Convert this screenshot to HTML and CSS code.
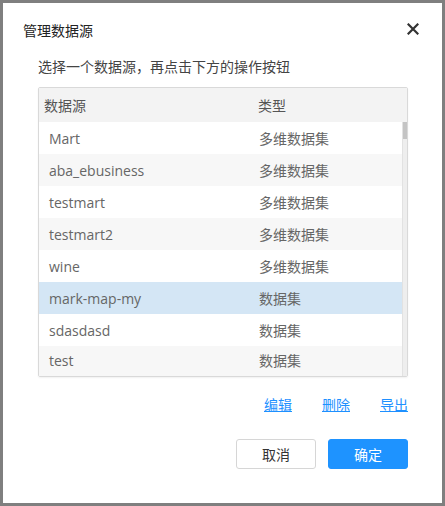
FILE: index.html
```html
<!DOCTYPE html>
<html lang="zh">
<head>
<meta charset="utf-8">
<title>管理数据源</title>
<link rel="stylesheet" href="styles.css">
</head>
<body>
<div class="dialog">
  <div class="dlg-head">
    <span class="dlg-title">管理数据源</span>
    <svg class="close" width="12" height="12" viewBox="0 0 12 12"><path d="M1.5 1.5 L10.5 10.5 M10.5 1.5 L1.5 10.5" stroke="#333" stroke-width="2.2" stroke-linecap="square" fill="none"/></svg>
  </div>
  <div class="dlg-body">
    <p class="hint">选择一个数据源，再点击下方的操作按钮</p>
    <div class="grid">
      <div class="grid-head">
        <span class="c1">数据源</span>
        <span class="c2">类型</span>
      </div>
      <div class="grid-body">
        <div class="rows">
          <div class="row"><span class="c1">Mart</span><span class="c2">多维数据集</span></div>
          <div class="row alt"><span class="c1">aba_ebusiness</span><span class="c2">多维数据集</span></div>
          <div class="row"><span class="c1">testmart</span><span class="c2">多维数据集</span></div>
          <div class="row alt"><span class="c1">testmart2</span><span class="c2">多维数据集</span></div>
          <div class="row"><span class="c1">wine</span><span class="c2">多维数据集</span></div>
          <div class="row sel"><span class="c1">mark-map-my</span><span class="c2">数据集</span></div>
          <div class="row"><span class="c1">sdasdasd</span><span class="c2">数据集</span></div>
          <div class="row alt last"><span class="c1">test</span><span class="c2">数据集</span></div>
        </div>
        <div class="scrollbar"><div class="thumb"></div></div>
      </div>
    </div>
    <div class="links">
      <a href="#">编辑</a>
      <a href="#">删除</a>
      <a href="#">导出</a>
    </div>
    <div class="buttons">
      <button class="btn">取消</button>
      <button class="btn primary">确定</button>
    </div>
  </div>
</div>
</body>
</html>
```
FILE: styles.css
```css
html, body {
  margin: 0;
  padding: 0;
}
body {
  background: #7f7f7f;
  width: 445px;
  height: 506px;
  padding: 3px;
  box-sizing: border-box;
  font-family: "Open Sans", "Noto Sans CJK SC", sans-serif;
  font-size: 14px;
  overflow: hidden;
}
.dialog {
  width: 439px;
  height: 500px;
  background: #fff;
  box-sizing: border-box;
}
.dlg-head {
  display: flex;
  align-items: center;
  justify-content: space-between;
  padding: 17px 23px 0 20px;
  height: 20px;
}
.dlg-title {
  font-family: "Noto Sans CJK SC", sans-serif;
  font-size: 14px;
  line-height: 20px;
  color: #222;
}
.close {
  display: block;
  margin-top: -2px;
}
.dlg-body {
  padding: 16px 34px 0 35px;
}
.hint {
  margin: 0;
  font-family: "Noto Sans CJK SC", sans-serif;
  font-size: 14px;
  line-height: 20px;
  color: #444;
}
.grid {
  margin-top: 11px;
  border: 1px solid #d9d9d9;
  border-radius: 2px;
  box-shadow: 0 1px 2px rgba(0,0,0,0.06);
  overflow: hidden;
}
.grid-head {
  display: flex;
  height: 34px;
  align-items: center;
  background: #f3f3f3;
  color: #555;
  font-family: "Noto Sans CJK SC", sans-serif;
}
.grid-head .c1 {
  width: 214px;
  padding-left: 5px;
}
.grid-body {
  display: flex;
  height: 254px;
  overflow: hidden;
}
.rows {
  flex: 1;
}
.row {
  display: flex;
  align-items: center;
  height: 32px;
  color: #666;
  background: #fff;
}
.row.last {
  height: 30px;
  padding-bottom: 2px;
  box-sizing: border-box;
}
.row.alt {
  background: #f7f7f7;
}
.row.sel {
  background: #d4e6f5;
}
.row .c1 {
  width: 210px;
  padding-left: 10px;
}
.row .c2 {
  font-family: "Noto Sans CJK SC", sans-serif;
}
.scrollbar {
  width: 4px;
  background: #eeeeee;
  border-left: 1px solid #e2e2e2;
}
.thumb {
  height: 17px;
  background: #c4c4c4;
}
.links {
  display: flex;
  justify-content: flex-end;
  gap: 30px;
  margin-top: 17px;
  line-height: 20px;
}
.links a {
  font-family: "Noto Sans CJK SC", sans-serif;
  color: #1e90ff;
  text-decoration: underline;
  font-size: 14px;
}
.buttons {
  display: flex;
  justify-content: flex-end;
  gap: 12px;
  margin-top: 25px;
}
.btn {
  width: 80px;
  height: 30px;
  border: 1px solid #d6d6d6;
  border-radius: 3px;
  background: #fff;
  color: #333;
  font-family: "Noto Sans CJK SC", sans-serif;
  font-size: 14px;
  padding: 0;
}
.btn.primary {
  background: #1e93ff;
  border-color: #1e93ff;
  color: #fff;
}
```
